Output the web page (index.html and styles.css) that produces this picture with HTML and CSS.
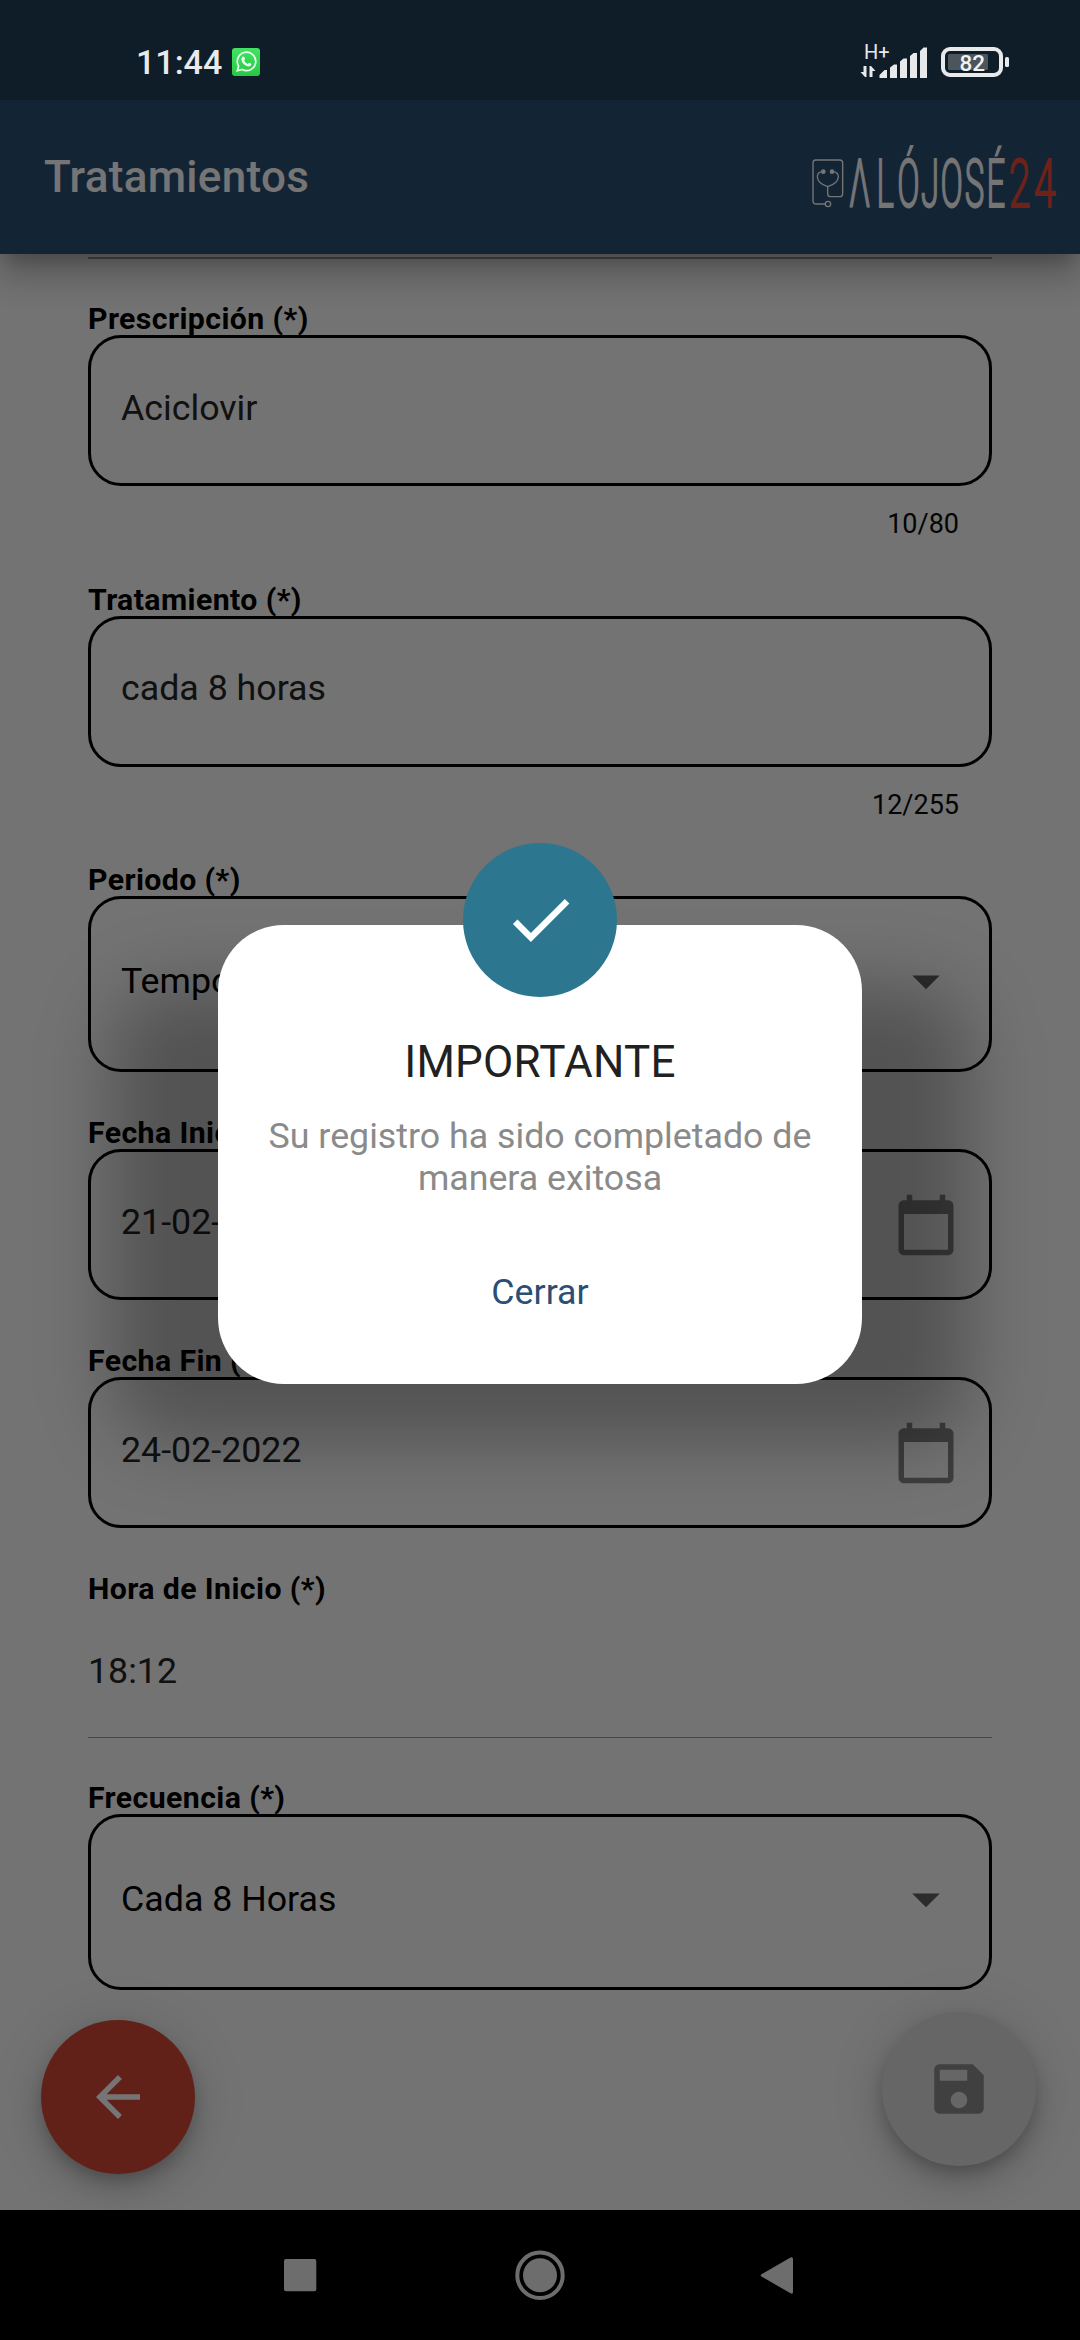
FILE: index.html
```html
<!DOCTYPE html>
<html lang="es">
<head>
<meta charset="utf-8">
<title>Tratamientos</title>
<link rel="stylesheet" href="styles.css">
</head>
<body>
<div class="screen">
  <div class="status-bar">
    <span class="clock">11:44</span>
    <svg class="chat-icon" width="28" height="28" viewBox="0 0 28 28">
      <defs><linearGradient id="chat" x1="0" y1="0" x2="0" y2="1"><stop offset="0" stop-color="#42e263"/><stop offset="1" stop-color="#27c944"/></linearGradient></defs>
      <rect width="28" height="28" rx="3" fill="url(#chat)"/>
      <path d="M5.3 22.8l1.3-4.7a9.2 9.2 0 1 1 3.5 3.4z" fill="none" stroke="#effbf0" stroke-width="1.7"/>
      <path d="M10.6 8.7c.6-.4 1.3-.3 1.6.3l.8 1.9c.1.5-.8 1.3-.9 1.7.7 1.6 1.900 2.700 3.500 3.400.5 0 1.100-1.200 1.600-1.200l2 1c.7.5-.3 2.200-1.300 2.500-1.700.6-4.400-.5-6.200-2.300-1.900-1.900-3.500-5-1.100-7.300z" fill="#effbf0"/>
    </svg>
    <svg class="status-icons" width="160" height="50" viewBox="860 35 160 50">
      <text class="network" x="864" y="59">H+</text>
      <path d="M866.500 66v11h-1.500l-4.500-5h3v-6zM869.500 77V66h1.500l4.500 5h-3v6z" fill="#e8e9ea"/>
      <path d="M879.500 78v-3l5-5h2.500v8zM890 78V67.500l4-3h3V78zM900 78V61.500l3.500-3h3.500V78zM910 78V56l3.500-3h3.500V78zM920 78V51l3.500-3.500h3.500V78z" fill="#e8e9ea"/>
      <rect x="943" y="49" width="58" height="26" rx="7" fill="none" stroke="#e8e9ea" stroke-width="4"/>
      <rect x="948" y="54" width="40" height="16" rx="1.500" fill="#4b555e"/>
      <rect x="1005" y="57" width="4" height="10" rx="1.500" fill="#e8e9ea"/>
      <text class="charge" x="959.500" y="71">82</text>
    </svg>
  </div>

  <header class="app-bar">
    <h1 class="page-title">Tratamientos</h1>
    <svg class="logo" width="290" height="110" viewBox="790 122 290 110" role="img" aria-label="ALÓJOSÉ24">
      <g class="logo-mark" transform="translate(790 130) scale(.3333)">
        <path d="M106 222H79Q69 222 69 212V99Q69 90 78 90H149Q158 90 158 99V191Q158 200 149 200H122Q113 200 113 191V170"/>
        <circle cx="114" cy="222" r="8"/>
        <path d="M96 125Q82 127 82 141Q83 160 113 170Q144 160 145 141Q145 127 130 125"/>
        <circle class="dot" cx="100" cy="125" r="5"/>
        <circle class="dot" cx="126" cy="125" r="5"/>
      </g>
      <g transform="translate(810 206.500) scale(.5 1)">
        <text class="logo-name" x="78 133 174.600 222 261 309.400 353">ΛLÓJOSÉ</text>
      </g>
      <g transform="translate(1009 206.500) scale(.6 1)">
        <text class="logo-name logo-number" x="0 42">24</text>
      </g>
    </svg>
  </header>

  <main class="form">
    <hr class="rule rule-top">
    <div class="field first">
      <label class="label">Prescripción (*)</label>
      <div class="box">Aciclovir</div>
      <span class="counter">10/80</span>
    </div>
    <div class="field">
      <label class="label">Tratamiento (*)</label>
      <div class="box">cada 8 horas</div>
      <span class="counter">12/255</span>
    </div>
    <div class="field">
      <label class="label">Periodo (*)</label>
      <div class="box select">Temporal
        <svg class="caret" viewBox="0 0 24 24"><path d="M7 10l5 5 5-5z"/></svg>
      </div>
    </div>
    <div class="field">
      <label class="label">Fecha Inicio</label>
      <div class="box">21-02-2022
        <svg class="calendar" viewBox="0 0 24 24"><path d="M20 3h-1V1h-2v2H7V1H5v2H4c-1.100 0-2 .9-2 2v16c0 1.100.9 2 2 2h16c1.100 0 2-.9 2-2V5c0-1.100-.9-2-2-2zm0 18H4V8h16v13z"/></svg>
      </div>
    </div>
    <div class="field">
      <label class="label">Fecha Fin (*)</label>
      <div class="box">24-02-2022
        <svg class="calendar" viewBox="0 0 24 24"><path d="M20 3h-1V1h-2v2H7V1H5v2H4c-1.100 0-2 .9-2 2v16c0 1.100.9 2 2 2h16c1.100 0 2-.9 2-2V5c0-1.100-.9-2-2-2zm0 18H4V8h16v13z"/></svg>
      </div>
    </div>
    <div class="field">
      <label class="label">Hora de Inicio (*)</label>
      <div class="time">18:12</div>
      <hr class="rule">
    </div>
    <div class="field last">
      <label class="label">Frecuencia (*)</label>
      <div class="box select">Cada 8 Horas
        <svg class="caret" viewBox="0 0 24 24"><path d="M7 10l5 5 5-5z"/></svg>
      </div>
    </div>
  </main>

  <div class="fab back">
    <svg width="66" height="66" viewBox="0 0 24 24"><path d="M20 11H7.830l5.590-5.590L12 4l-8 8 8 8 1.410-1.410L7.830 13H20v-2z"/></svg>
  </div>
  <div class="fab save">
    <svg width="66" height="66" viewBox="0 0 24 24"><path d="M17 3H5c-1.110 0-2 .9-2 2v14c0 1.100.89 2 2 2h14c1.100 0 2-.9 2-2V7l-4-4zm-5 16c-1.660 0-3-1.340-3-3s1.340-3 3-3 3 1.340 3 3-1.340 3-3 3zm3-10H5V5h10v4z"/></svg>
  </div>

  <div class="scrim">
    <section class="dialog">
      <div class="badge">
        <svg width="77" height="77" viewBox="0 0 24 24"><path d="M9 16.170L4.830 12l-1.420 1.410L9 19 21 7l-1.410-1.410z"/></svg>
      </div>
      <h2 class="dialog-title">IMPORTANTE</h2>
      <p class="dialog-text">Su registro ha sido completado de<br>manera exitosa</p>
      <button class="dialog-close">Cerrar</button>
    </section>
  </div>

  <nav class="nav-bar">
    <svg width="160" height="60" viewBox="220 2245 160 60"><rect x="284" y="2259" width="32.300" height="32.300" rx="2"/></svg>
    <svg width="160" height="60" viewBox="460 2245 160 60"><circle cx="540" cy="2275.300" r="17"/><circle class="ring" cx="540" cy="2275.300" r="22.700"/></svg>
    <svg width="160" height="60" viewBox="700 2245 160 60"><path d="M761.500 2274.300L790.500 2257.500Q793 2256.500 793 2259V2292Q793 2294.500 790.500 2293.300L761.500 2276.500Q760 2275.400 761.500 2274.300z"/></svg>
  </nav>
</div>
</body>
</html>
```
FILE: styles.css
```css
* {
  box-sizing: border-box;
}

body {
  margin: 0;
  font-family: Roboto, "Noto Sans", sans-serif;
}

.screen {
  position: relative;
  display: flex;
  flex-direction: column;
  width: 1080px;
  height: 2340px;
  overflow: hidden;
  background: #fafafa;
}

.status-bar {
  position: relative;
  z-index: 4;
  flex: none;
  display: flex;
  align-items: center;
  height: 100px;
  padding: 24px 60px 0 136px;
  background: #0f1d29;
}

.clock {
  color: #e8e9ea;
  font-size: 34px;
  font-weight: 500;
  line-height: 40px;
}

.chat-icon {
  margin-left: 10px;
}

.status-icons {
  margin: -4px 0 0 auto;
}

.network {
  fill: #e8e9ea;
  font-size: 20px;
}

.charge {
  fill: #f2f2f3;
  font-size: 22.5px;
  font-weight: 500;
}

.app-bar {
  position: relative;
  z-index: 1;
  flex: none;
  display: flex;
  align-items: center;
  justify-content: space-between;
  height: 154px;
  padding-left: 44px;
  background: #2b5075;
  box-shadow: 0 14px 16px -8px rgba(0, 0, 0, .2), 0 22px 32px 3px rgba(0, 0, 0, .14), 0 8px 44px 5px rgba(0, 0, 0, .12);
}

.page-title {
  margin: 0;
  color: #fff;
  font-size: 44px;
  font-weight: 500;
  line-height: 52px;
  letter-spacing: .3px;
}

.logo {
  flex: none;
}

.logo-mark {
  fill: none;
  stroke: #fff;
  stroke-width: 4;
}

.logo-mark .dot {
  fill: #fff;
}

.logo-name {
  fill: #fff;
  stroke: #fff;
  stroke-width: 1.8;
  font-size: 66px;
  font-weight: 300;
}

.logo-number {
  fill: #f04a36;
  stroke: #f04a36;
}

.form {
  flex: 1;
  display: flex;
  flex-direction: column;
  min-height: 0;
  padding: 3px 88px 0;
}

.rule {
  width: 100%;
  height: 1px;
  margin: 0;
  border: 0;
  background: #9c9c9c;
}

.rule-top {
  flex: none;
  height: 2px;
}

.field {
  flex: none;
  display: flex;
  flex-direction: column;
  margin-top: 41px;
}

.field.first {
  margin-top: 40px;
}

.field.last {
  margin-top: 40px;
}

.label {
  height: 36px;
  color: #000;
  font-size: 30.25px;
  font-weight: 700;
  line-height: 39px;
  letter-spacing: .4px;
  white-space: nowrap;
}

.box {
  display: flex;
  align-items: center;
  justify-content: space-between;
  height: 151px;
  padding: 0 30px 6px;
  border: 3px solid #000;
  border-radius: 33px;
  color: #252525;
  font-size: 35.75px;
}

.box.select {
  height: 176px;
  color: #000;
}

.counter {
  align-self: flex-end;
  height: 52.5px;
  padding-right: 33px;
  color: #0a0a0a;
  font-size: 27px;
  line-height: 76px;
}

.caret,
.calendar {
  width: 66px;
  height: 66px;
}

.caret {
  fill: #616161;
}

.calendar {
  margin-bottom: -6px;
  fill: #868686;
}

.time {
  height: 132px;
  padding-top: 24px;
  color: #252525;
  font-size: 35.75px;
  line-height: 84px;
}

.fab {
  position: absolute;
  display: grid;
  place-items: center;
  width: 154px;
  height: 154px;
  border-radius: 50%;
  box-shadow: 0 8px 16px -3px rgba(0, 0, 0, .2), 0 16px 32px rgba(0, 0, 0, .14), 0 3px 57px rgba(0, 0, 0, .12);
}

.back {
  left: 41px;
  top: 2020px;
  background: #d54836;
  fill: #fff;
}

.save {
  left: 882px;
  top: 2012px;
  background: #dedede;
  fill: #8b8b8b;
}

.scrim {
  position: absolute;
  inset: 0;
  z-index: 3;
  display: flex;
  flex-direction: column;
  align-items: center;
  padding-top: 925px;
  background: rgba(0, 0, 0, .54);
}

.dialog {
  position: relative;
  display: flex;
  flex-direction: column;
  align-items: center;
  width: 644px;
  height: 459px;
  border-radius: 66px;
  background: #fff;
}

/* Soft shadow, wider than the dialog and dropped below it */
.dialog::before {
  content: "";
  position: absolute;
  z-index: -1;
  inset: 62px -106px -58px;
  border-radius: 60px;
  background: rgba(0, 0, 0, .28);
  filter: blur(36px);
}

.badge {
  flex: none;
  display: grid;
  place-items: center;
  width: 154px;
  height: 154px;
  margin-top: -82px;
  border-radius: 50%;
  background: #2c778f;
  fill: #fff;
}

.badge svg {
  margin-bottom: 1px;
}

.dialog-title {
  margin: 39px 0 0;
  color: #212121;
  font-size: 44px;
  font-weight: 400;
  line-height: 52px;
  letter-spacing: .25px;
}

.dialog-text {
  margin: 28px 0 0;
  color: #8a8a8a;
  font-size: 35.75px;
  line-height: 41.5px;
  text-align: center;
}

.dialog-close {
  margin-top: 72px;
  padding: 0;
  border: 0;
  background: none;
  color: #2b4e76;
  font: 400 35.75px/42px Roboto, "Noto Sans", sans-serif;
}

.nav-bar {
  position: relative;
  z-index: 4;
  flex: none;
  display: flex;
  align-items: center;
  justify-content: center;
  gap: 80px;
  height: 130px;
  background: #000;
  fill: #6d6d6d;
}

.ring {
  fill: none;
  stroke: #6d6d6d;
  stroke-width: 4;
}
```
